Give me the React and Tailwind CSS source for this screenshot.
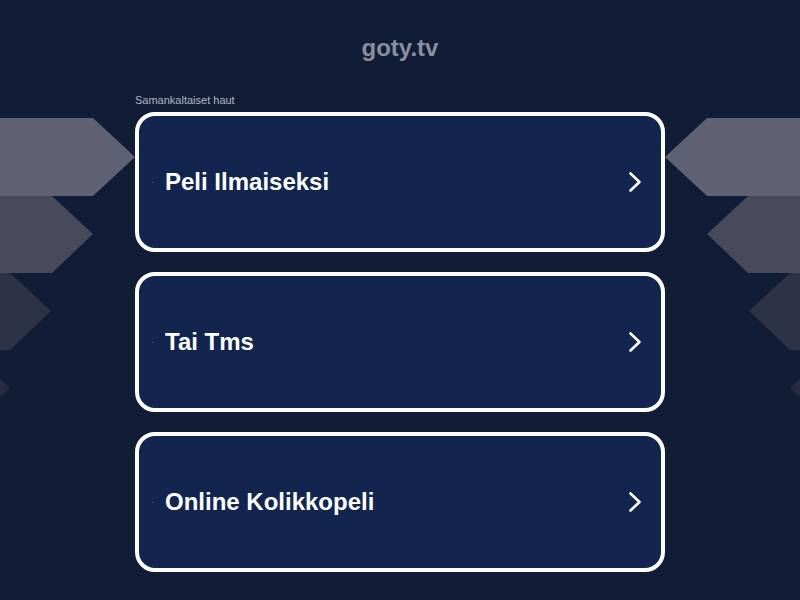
const links = ['Peli Ilmaiseksi', 'Tai Tms', 'Online Kolikkopeli']

const shapes = [
  { top: 118, mid: 157, bottom: 196, flat: 93, tip: 135, fill: '#5f6272' },
  { top: 196, mid: 234, bottom: 273, flat: 52, tip: 93, fill: '#474a5b' },
  { top: 273, mid: 311, bottom: 350, flat: 10, tip: 51, fill: '#2e3246' },
  { top: 350, mid: 388, bottom: 427, flat: -31, tip: 10, fill: '#2b2a43' },
]

function Decor({ side }) {
  // arrow stripes pointing at the card column
  const pts = (s) =>
    side === 'left'
      ? `-40,${s.top} ${s.flat},${s.top} ${s.tip},${s.mid} ${s.flat},${s.bottom} -40,${s.bottom}`
      : `840,${s.top} ${800 - s.flat},${s.top} ${800 - s.tip},${s.mid} ${800 - s.flat},${s.bottom} 840,${s.bottom}`
  return (
    <svg className="pointer-events-none absolute inset-0 h-[600px] w-[800px]" viewBox="0 0 800 600">
      {shapes.map((s) => (
        <polygon key={s.top} points={pts(s)} fill={s.fill} />
      ))}
    </svg>
  )
}

function Chevron() {
  return (
    <svg className="ml-auto h-[22px] w-[14px]" viewBox="0 0 14 22" fill="none">
      <polyline
        points="2.5,2.5 11.5,11 2.5,19.5"
        stroke="white"
        strokeWidth="2.6"
        strokeLinecap="round"
        strokeLinejoin="round"
      />
    </svg>
  )
}

export default function App() {
  return (
    <div
      className="relative min-h-[600px] w-full overflow-hidden bg-[#111c37]"
      style={{ fontFamily: '"Liberation Sans", Arial, sans-serif' }}
    >
      <Decor side="left" />
      <Decor side="right" />

      <div className="relative flex flex-col items-center pt-[34px]">
        <h1 className="text-[24px] font-bold leading-[28px] text-[#8a8f9d]">goty.tv</h1>

        <div className="mt-[31px] w-[530px]">
          <p className="text-[11px] leading-[14px] text-[#b3b7c3]">Samankaltaiset haut</p>

          <div className="mt-[5px] flex flex-col gap-[20px]">
            {links.map((label) => (
              <a
                key={label}
                href="#"
                className="flex h-[140px] items-center rounded-[20px] border-4 border-white bg-[#11254e] pl-[13px] pr-[19px]"
              >
                <span className="h-[1px] w-[1px] bg-[#56678a]" />
                <span className="ml-[12px] text-[24px] font-bold text-white">{label}</span>
                <Chevron />
              </a>
            ))}
          </div>
        </div>
      </div>
    </div>
  )
}
